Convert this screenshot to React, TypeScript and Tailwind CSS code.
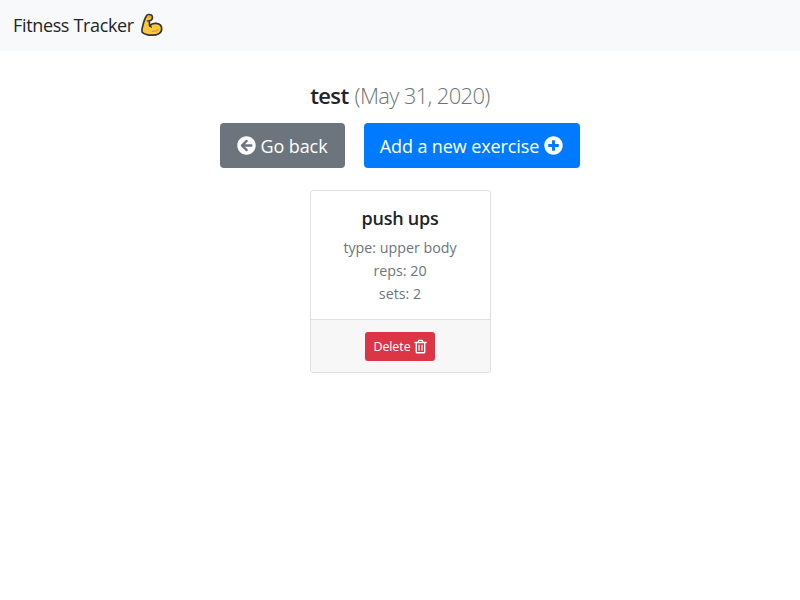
import React from "react";
import { FaArrowCircleLeft, FaPlusCircle } from "react-icons/fa";

function Muscle() {
  return (
    <svg viewBox="0 0 24 24" className="mb-px ml-[6px] h-6 w-6" aria-hidden="true">
      <path
        d="M6.200 3.200C7 1.500 9.500 1.300 11.200 2c1.500.7 1.500 3.200.6 4.500-.7 1-1.700 1.200-2.500 1.400L9.600 13c1.700-2.100 4.200-3 6.700-2.600 3.300.5 5.500 2.800 5.400 5.700-.2 4.100-4.600 6.100-9.400 6.100-4.600 0-8.200-1.200-10-2.900C1.300 17.900 2.200 14.700 3 11.800 4 8.200 4.900 5.200 6.200 3.200Z"
        fill="#fdc83c" stroke="#343638" strokeWidth="1.700" strokeLinejoin="round"
      />
      <path d="M8.900 7.800h-1.600M9.500 12.700c.8.3 1.500.9 1.800 1.600" fill="none" stroke="#343638" strokeWidth="1.300" strokeLinecap="round" />
      <path d="M7.800 4.200c.8-.4 1.700-.4 2.500 0M12.300 18.400c2.400.1 4.300-.5 5.700-1.700" fill="none" stroke="#dc9c2d" strokeWidth="1.200" strokeLinecap="round" />
    </svg>
  );
}

function Trash() {
  return (
    <svg viewBox="0 0 13 15" className="h-[15px] w-[13px]" fill="none" stroke="currentColor" aria-hidden="true">
      <path d="M.8 3.500h11.400M4 3.200l.8-1.900h3.400L9 3.200" strokeWidth="1.300" strokeLinecap="round" strokeLinejoin="round" />
      <path d="M2.300 3.800v9.200q0 .8.800.8h6.800q.8 0 .8-.8V3.800" strokeWidth="1.400" />
      <path d="M5 5.800v5.900M8 5.800v5.900" strokeWidth="1.200" />
    </svg>
  );
}

export default function App() {
  return (
    <div className="min-h-screen bg-white font-['Open_Sans','Noto_Sans',sans-serif] text-[#212529]">
      <nav className="flex h-[51px] items-center bg-[#f8f9fa] px-[13px] text-lg tracking-[-0.35px]">
        <span className="pb-px">Fitness Tracker</span>
        <Muscle />
      </nav>
      <main className="flex flex-col items-center pt-[29px]">
        <h1 className="text-[22px] leading-[30px] tracking-[-0.65px]">
          <b className="mr-px font-semibold">test</b>{" "}
          <span className="font-light text-[#6c757d]">(May 31, 2020)</span>
        </h1>
        <div className="mt-[13px] flex gap-[19px] text-lg tracking-[-0.1px] text-white">
          <button className="flex h-[45px] w-[125px] items-center justify-center gap-[5px] rounded bg-[#6c757d] pr-px">
            <FaArrowCircleLeft className="size-[19px]" />
            <span>Go back</span>
          </button>
          <button className="flex h-[45px] w-[216px] items-center justify-center gap-[5px] rounded bg-[#007bff] pr-px">
            <span>Add a new exercise</span>
            <FaPlusCircle className="size-[19px]" />
          </button>
        </div>
        <article className="mt-[22px] flex h-[183px] w-[181px] flex-col overflow-hidden rounded-[3px] border border-[#dfdfdf] text-center">
          <div className="flex-1 pt-[14px]">
            <h2 className="text-lg leading-[27px] font-semibold tracking-[-0.25px]">push ups</h2>
            <div className="mt-[5px] text-[14.250px] leading-[22.750px] text-[#6c757d]">
              <p>type: upper body</p>
              <p>reps: 20</p>
              <p>sets: 2</p>
            </div>
          </div>
          <footer className="flex h-[53px] items-center justify-center border-t border-[#dfdfdf] bg-[#f7f7f7]">
            <button className="flex h-[29px] w-[70px] items-center justify-center gap-[3px] rounded-[3px] bg-[#dc3545] text-[12.500px] tracking-[-0.1px] text-white">
              <span className="pt-[2px]">Delete</span>
              <Trash />
            </button>
          </footer>
        </article>
      </main>
    </div>
  );
}
